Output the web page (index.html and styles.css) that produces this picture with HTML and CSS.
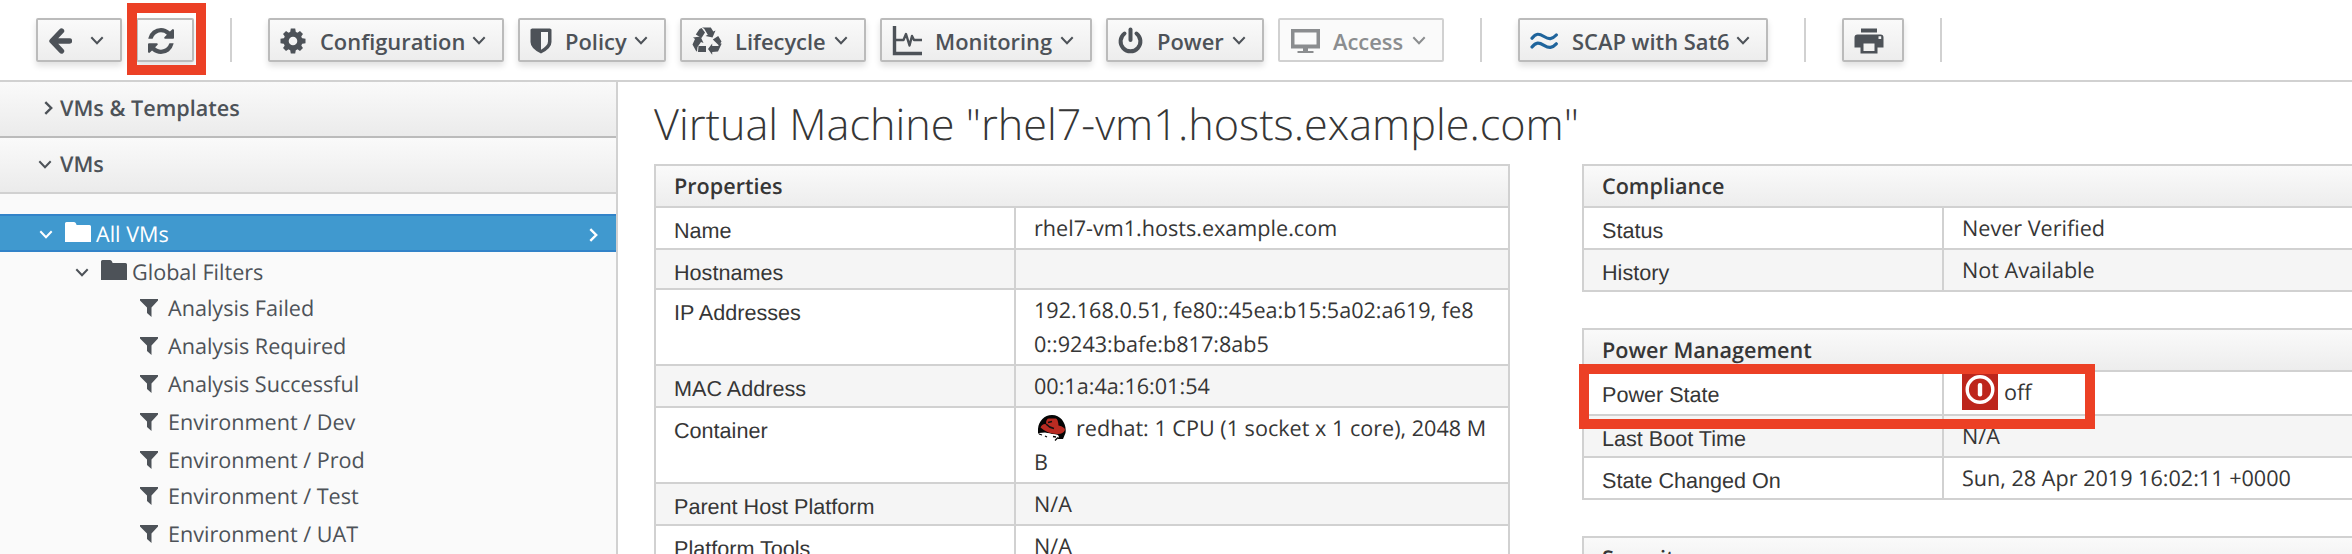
FILE: index.html
```html
<!DOCTYPE html>
<html lang="en">
<head>
<meta charset="utf-8">
<title>Virtual Machine "rhel7-vm1.hosts.example.com"</title>
<link rel="stylesheet" href="styles.css">
</head>
<body>
<svg class="defs" width="0" height="0">
  <symbol id="down" viewBox="0 0 14 9"><path d="M1.3 1.3 7 7.2l5.7-5.9" fill="none" stroke="currentColor" stroke-width="2"/></symbol>
  <symbol id="right" viewBox="0 0 9 14"><path d="M1.3 1.2 7.2 7l-5.9 5.8" fill="none" stroke="currentColor" stroke-width="2.4"/></symbol>
  <symbol id="folder" viewBox="0 0 26 20"><path d="M0 1.5Q0 0 1.5 0H9q1.5 0 2 1.5L11.600 3H24.500Q26 3 26 4.500V20H0z" fill="currentColor"/></symbol>
  <symbol id="filter" viewBox="0 0 18 18"><path d="M0 0H18V1.500L11.500 8.500V18L7 14V8.500L0 1.500z" fill="currentColor"/></symbol>
</svg>

<header class="toolbar">
  <button class="btn btn-back"><svg class="icon" width="24" height="26" viewBox="0 0 24 26"><path d="M13.500 3 4 13l9.500 10M5 13H21.500" fill="none" stroke="currentColor" stroke-width="5.400" stroke-linecap="round" stroke-linejoin="round"/></svg><svg class="caret"><use href="#down"/></svg></button>
  <span class="slot">
    <button class="btn btn-refresh"><svg class="icon" width="26" height="26" viewBox="0 0 1536 1536"><path fill="currentColor" d="M1511 928q0 5-1 7-64 268-268 434.500T764 1536q-146 0-282.500-55T238 1324l-129 129q-19 19-45 19t-45-19-19-45V960q0-26 19-45t45-19h448q26 0 45 19t19 45-19 45l-137 137q71 66 161 102t187 36q134 0 250-65t186-179q11-17 53-117 8-23 30-23h192q13 0 22.500 9.500t9.500 22.500zm25-800v448q0 26-19 45t-45 19h-448q-26 0-45-19t-19-45 19-45l138-138Q969 256 768 256q-134 0-250 65T332 500q-11 17-53 117-8 23-30 23H50q-13 0-22.500-9.500T18 608v-7q65-268 270-434.500T768 0q146 0 284 55.500T1297 212l130-129q19-19 45-19t45 19 19 45z"/></svg></button>
    <i class="mark mark-refresh"></i>
  </span>
  <i class="sep sep-a"></i>
  <div class="group">
    <button class="btn w-config"><svg class="icon" width="26" height="26" viewBox="-13 -13 26 26"><g fill="currentColor"><path fill-rule="evenodd" d="M-9.500 0a9.500 9.500 0 1 0 19 0a9.500 9.500 0 1 0-19 0M-4.300 0a4.300 4.300 0 1 1 8.600 0a4.300 4.300 0 1 1-8.600 0"/><g id="t"><path d="M-3-8-2.200-12.500H2.200L3-8zM-3 8-2.200 12.500H2.200L3 8zM-8-3-12.500-2.200V2.200L-8 3zM8-3 12.500-2.200V2.200L8 3z"/></g><use href="#t" transform="rotate(45) scale(.96)"/></g></svg><span>Configuration</span><svg class="caret"><use href="#down"/></svg></button>
    <button class="btn w-policy"><svg class="icon" width="22" height="26" viewBox="0 0 22 26"><path fill="currentColor" fill-rule="evenodd" d="M.500 1.500 2 .500H20L21.500 1.500V14Q21.500 20.500 11 25.500.500 20.500.500 14zM11 4V21.800Q18 17.500 18 13.500V4z"/></svg><span>Policy</span><svg class="caret"><use href="#down"/></svg></button>
    <button class="btn w-life"><svg class="icon" width="30" height="30" viewBox="0 0 30 30"><g fill="currentColor"><path d="M10 1.500H18.800L21.300 5.500l2.200-1L20.500 11.500 13.500 10l2.300-1.300L12.200 2.800zM9.600 2 13 6.500 9.500 12 3.800 8.600 7.500 3z"/><path d="M29 17 29.500 18 26 25.500 20.200 26v2.800L16 23l4.200-5.500V20H26zM20.800 13.500l5.400-3.500 3.300 5.400-2.500 4.200z"/><path d="M3 13 1 11.500 8.500 10.500 11.500 17 9 16 5.500 21 5 25.800 3.800 24.500.500 18.500zM6.500 20H14v6H6z"/></g></svg><span>Lifecycle</span><svg class="caret"><use href="#down"/></svg></button>
    <button class="btn w-mon"><svg class="icon" width="30" height="30" viewBox="0 0 30 30"><g fill="none" stroke="currentColor"><path d="M2.500 0V27.500H30" stroke-width="3.400"/><path d="M4 14H11.500L14 8 17.500 19.500 20 10 22 14H30" stroke-width="2.400" stroke-linejoin="round"/></g></svg><span>Monitoring</span><svg class="caret"><use href="#down"/></svg></button>
    <button class="btn w-power"><svg class="icon" width="26" height="28" viewBox="0 0 26 28"><g fill="none" stroke="currentColor" stroke-width="4" stroke-linecap="round"><path d="M6.500 6.500A9.900 9.900 0 1 0 18.500 6.500"/><path d="M12.500 2.500V13"/></g></svg><span>Power</span><svg class="caret"><use href="#down"/></svg></button>
    <button class="btn w-access off"><svg class="icon" width="30" height="26" viewBox="0 0 30 26"><path fill="currentColor" fill-rule="evenodd" d="M1 1H30V20.500H18V23H23.500V25H7.500V23H13V20.500H1zM4.500 4.500V16.500H26.500V4.500z"/></svg><span>Access</span><svg class="caret"><use href="#down"/></svg></button>
  </div>
  <i class="sep sep-b"></i>
  <button class="btn w-scap"><svg class="icon" width="28" height="18" viewBox="0 0 28 18"><g fill="none" stroke="#1f649c" stroke-width="3.200" stroke-linecap="round"><path d="M2 6.200C6 1 9 1.500 14 4.500S22 7.500 26.300 3"/><path d="M2 15C6 9.800 9 10.300 14 13.300S22 16.300 26.300 11.800"/></g></svg><span>SCAP with Sat6</span><svg class="caret"><use href="#down"/></svg></button>
  <i class="sep sep-b"></i>
  <button class="btn w-print"><svg class="icon" width="30" height="26" viewBox="0 0 30 26"><path fill="currentColor" fill-rule="evenodd" d="M7 .500H23V4.500H7zM3.500 6.500H26.500Q29.500 6.500 29.500 9.500V19.500H23.500V25.500H6.500V19.500H.500V9.500Q.500 6.500 3.500 6.500zM9.500 15.500V23H20.500V15.500zM24.500 8.300V11H27.200V8.300z"/></svg></button>
  <i class="sep sep-b"></i>
</header>

<div class="page">
  <aside class="sidebar">
    <h4 class="acc closed"><span class="acc-arrow"><svg width="9" height="14"><use href="#right"/></svg></span>VMs &amp; Templates</h4>
    <h4 class="acc open"><span class="acc-arrow"><svg width="14" height="9"><use href="#down"/></svg></span>VMs</h4>
    <ul class="tree">
      <li class="node selected"><svg class="tw"><use href="#down"/></svg><svg class="folder"><use href="#folder"/></svg><span>All VMs</span><svg class="go"><use href="#right"/></svg></li>
      <li class="node level2 short"><svg class="tw"><use href="#down"/></svg><svg class="folder"><use href="#folder"/></svg><span>Global Filters</span></li>
      <li class="node leaf"><svg class="funnel"><use href="#filter"/></svg><span>Analysis Failed</span></li>
      <li class="node leaf"><svg class="funnel"><use href="#filter"/></svg><span>Analysis Required</span></li>
      <li class="node leaf"><svg class="funnel"><use href="#filter"/></svg><span>Analysis Successful</span></li>
      <li class="node leaf"><svg class="funnel"><use href="#filter"/></svg><span>Environment / Dev</span></li>
      <li class="node leaf short"><svg class="funnel"><use href="#filter"/></svg><span>Environment / Prod</span></li>
      <li class="node leaf"><svg class="funnel"><use href="#filter"/></svg><span>Environment / Test</span></li>
      <li class="node leaf"><svg class="funnel"><use href="#filter"/></svg><span>Environment / UAT</span></li>
    </ul>
  </aside>

  <main class="content">
    <h1>Virtual Machine "rhel7-vm1.hosts.example.com"</h1>
    <div class="columns">
      <section class="panel panel-left">
        <h3>Properties</h3>
        <dl>
          <div class="row"><dt>Name</dt><dd>rhel7-vm1.hosts.example.com</dd></div>
          <div class="row empty"><dt>Hostnames</dt><dd></dd></div>
          <div class="row"><dt>IP Addresses</dt><dd>192.168.0.51, fe80::45ea:b15:5a02:a619, fe8<br>0::9243:bafe:b817:8ab5</dd></div>
          <div class="row"><dt>MAC Address</dt><dd>00:1a:4a:16:01:54</dd></div>
          <div class="row"><dt>Container</dt><dd><svg class="vendor" width="28" height="26" viewBox="0 0 28 26"><path d="M0 18C-1 8 5 0 14 0S29 9 27.500 18L25 24 20 24 20 20 8 18 1 19z" fill="#050505"/><path d="M1 18 7 17.500 14 19 20 20 21 22 17 25.500 10 22 2 21z" fill="#fff"/><path d="M2.500 12.500Q4 8.500 8 9 8 3.500 11 3.500L18 3.500Q20 4 20.500 10.500 27 12 27 15 25 19.500 19 19 9 18.500 2.500 12.500z" fill="#b92b22"/><path d="M10 7.500 14 6.500M8 9Q11 12.500 16 13.500" stroke="#111" stroke-width="1.500" fill="none"/><path d="M1 19 4 20M7 21 9 22M15 21.500 18 22M17 25.500 20 22.500" stroke="#050505" stroke-width="1.300"/></svg>redhat: 1 CPU (1 socket x 1 core), 2048 M<br>B</dd></div>
          <div class="row"><dt>Parent Host Platform</dt><dd>N/A</dd></div>
          <div class="row"><dt>Platform Tools</dt><dd>N/A</dd></div>
        </dl>
      </section>
      <div class="stack">
        <section class="panel">
          <h3>Compliance</h3>
          <dl>
            <div class="row"><dt>Status</dt><dd>Never Verified</dd></div>
            <div class="row"><dt>History</dt><dd>Not Available</dd></div>
          </dl>
        </section>
        <section class="panel">
          <h3>Power Management</h3>
          <dl>
            <div class="row tall"><dt>Power State</dt><dd><svg class="state" width="36" height="38" viewBox="0 0 36 38"><path d="M0 0H36V38H0z" fill="#bd261c"/><circle cx="18" cy="17.500" r="12.800" fill="none" stroke="#fff" stroke-width="3.400"/><rect x="15.800" y="11" width="4.400" height="13.500" rx="2" fill="#fff"/></svg>off</dd></div>
            <div class="row"><dt>Last Boot Time</dt><dd>N/A</dd></div>
            <div class="row"><dt>State Changed On</dt><dd>Sun, 28 Apr 2019 16:02:11 +0000</dd></div>
          </dl>
          <i class="mark mark-power"></i>
        </section>
        <section class="panel">
          <h3>Security</h3>
        </section>
      </div>
    </div>
  </main>
</div>
</body>
</html>
```
FILE: styles.css
```css
* { box-sizing: border-box; }
html, body { height: 100%; }
body {
  margin: 0;
  overflow: hidden;
  background: #fff;
  color: #363636;
  font-family: "Open Sans", "Noto Sans", sans-serif;
  font-size: 21.6px;
  line-height: 34px;
  text-rendering: geometricPrecision;
}
h1, h3, h4, dl, dd, ul { margin: 0; padding: 0; }
svg { display: block; flex: none; }
.defs { position: absolute; }

.toolbar {
  display: flex;
  align-items: flex-start;
  height: 82px;
  padding: 18px 0 0 36px;
  border-bottom: 2px solid #d1d1d1;
}
.group { display: flex; gap: 14px; }
.btn {
  display: flex;
  align-items: center;
  height: 44px;
  padding: 0 16px 0 10px;
  border: 2px solid #bbb;
  border-radius: 2px;
  background: linear-gradient(#fafafa, #ededed);
  box-shadow: 0 4px 6px rgba(3, 3, 3, .12);
  color: #4d5258;
  font: 600 21.9px/34px "Open Sans", "Noto Sans", sans-serif;
  white-space: nowrap;
}
.btn span { margin-left: 13px; padding-top: 4px; }
.btn .icon { margin-top: 2px; }
.caret { width: 14px; height: 9px; margin: 0 0 0 auto; }
.off { border-color: #d1d1d1; background: #fafafa; box-shadow: none; color: #8b8d8f; }
.btn-back { width: 86px; }
.slot { position: relative; margin-left: 14px; }
.btn-refresh { width: 58px; }
.w-config { width: 236px; }
.w-config span, .w-scap span { margin-left: 14px; }
.w-policy { width: 148px; }
.w-life { width: 186px; }
.w-mon { width: 212px; }
.w-power { width: 158px; }
.w-access { width: 166px; }
.w-scap { width: 250px; }
.w-print { width: 62px; }
.sep { width: 2px; height: 44px; margin: 0 36px; background: #d1d1d1; }

.mark { position: absolute; border: 10px solid #ec4025; }
.mark-refresh { left: -9px; top: -15px; width: 79px; height: 72px; }
.mark-power { left: -5px; top: 34px; width: 516px; height: 65px; }

.page { display: flex; height: 472px; }
.sidebar { flex: none; width: 618px; border-right: 2px solid #d1d1d1; background: #fafafa; }
.acc {
  display: flex;
  align-items: center;
  height: 56px;
  padding: 0 0 0 36px;
  background: linear-gradient(#fafafa, #ebebeb);
  color: #4d5258;
  font-size: 21.6px;
  font-weight: 600;
}
.acc-arrow { display: flex; width: 24px; padding: 0 0 2px 2px; }
.closed { border-bottom: 2px solid #bbb; }
.closed .acc-arrow { padding-left: 8px; }
.open { border-bottom: 2px solid #d1d1d1; }
.tree { padding-top: 20px; list-style: none; color: #4d5258; }
.node { display: flex; align-items: flex-start; height: 38px; padding-left: 39px; line-height: 41px; }
.short { height: 36px; }
.selected {
  padding-right: 18px;
  background: #4099cf;
  box-shadow: inset 0 2px #3283c8, inset 0 -2px #3283c8;
  color: #fff;
}
.level2 { padding-left: 75px; }
.leaf { padding-left: 140px; }
.tw { width: 14px; height: 9px; margin-top: 16px; }
.folder { width: 26px; height: 20px; margin: 8px 5px 0 12px; }
.funnel { width: 18px; height: 18px; margin: 11px 10px 0 0; }
.go { width: 9px; height: 14px; margin: 14px 0 0 auto; }

.content { flex: 1; padding: 10px 0 0 36px; }
h1 { height: 72px; font-size: 43.2px; font-weight: 300; line-height: 63px; white-space: nowrap; }
.columns { display: flex; gap: 72px; }
.stack { display: flex; flex: none; flex-direction: column; gap: 36px; width: 856px; }
.panel { position: relative; border: 2px solid #d1d1d1; border-bottom: 0; }
.panel-left { flex: none; width: 856px; }
.panel h3 {
  height: 42px;
  padding: 4px 18px 0;
  border-bottom: 2px solid #d1d1d1;
  background: linear-gradient(#fafafa, #ededed);
  font-size: 21.6px;
  font-weight: 600;
}
.row { display: flex; border-bottom: 2px solid #d1d1d1; }
.row:nth-child(even) { background: #f5f5f5; }
.row dt { flex: none; width: 358px; padding: 8px 0 0 18px; font-family: "Liberation Sans", sans-serif; line-height: 30px; }
.row dd { display: block; flex: 1; min-height: 40px; padding: 4px 18px 2px; border-left: 2px solid #d1d1d1; white-space: nowrap; }
.empty dd { min-height: 38px; }
.tall dd { min-height: 42px; }
.vendor { display: inline-block; margin: 0 10px 0 4px; vertical-align: -5px; }
.state { float: left; margin: -4px 6px 0 0; }
```
